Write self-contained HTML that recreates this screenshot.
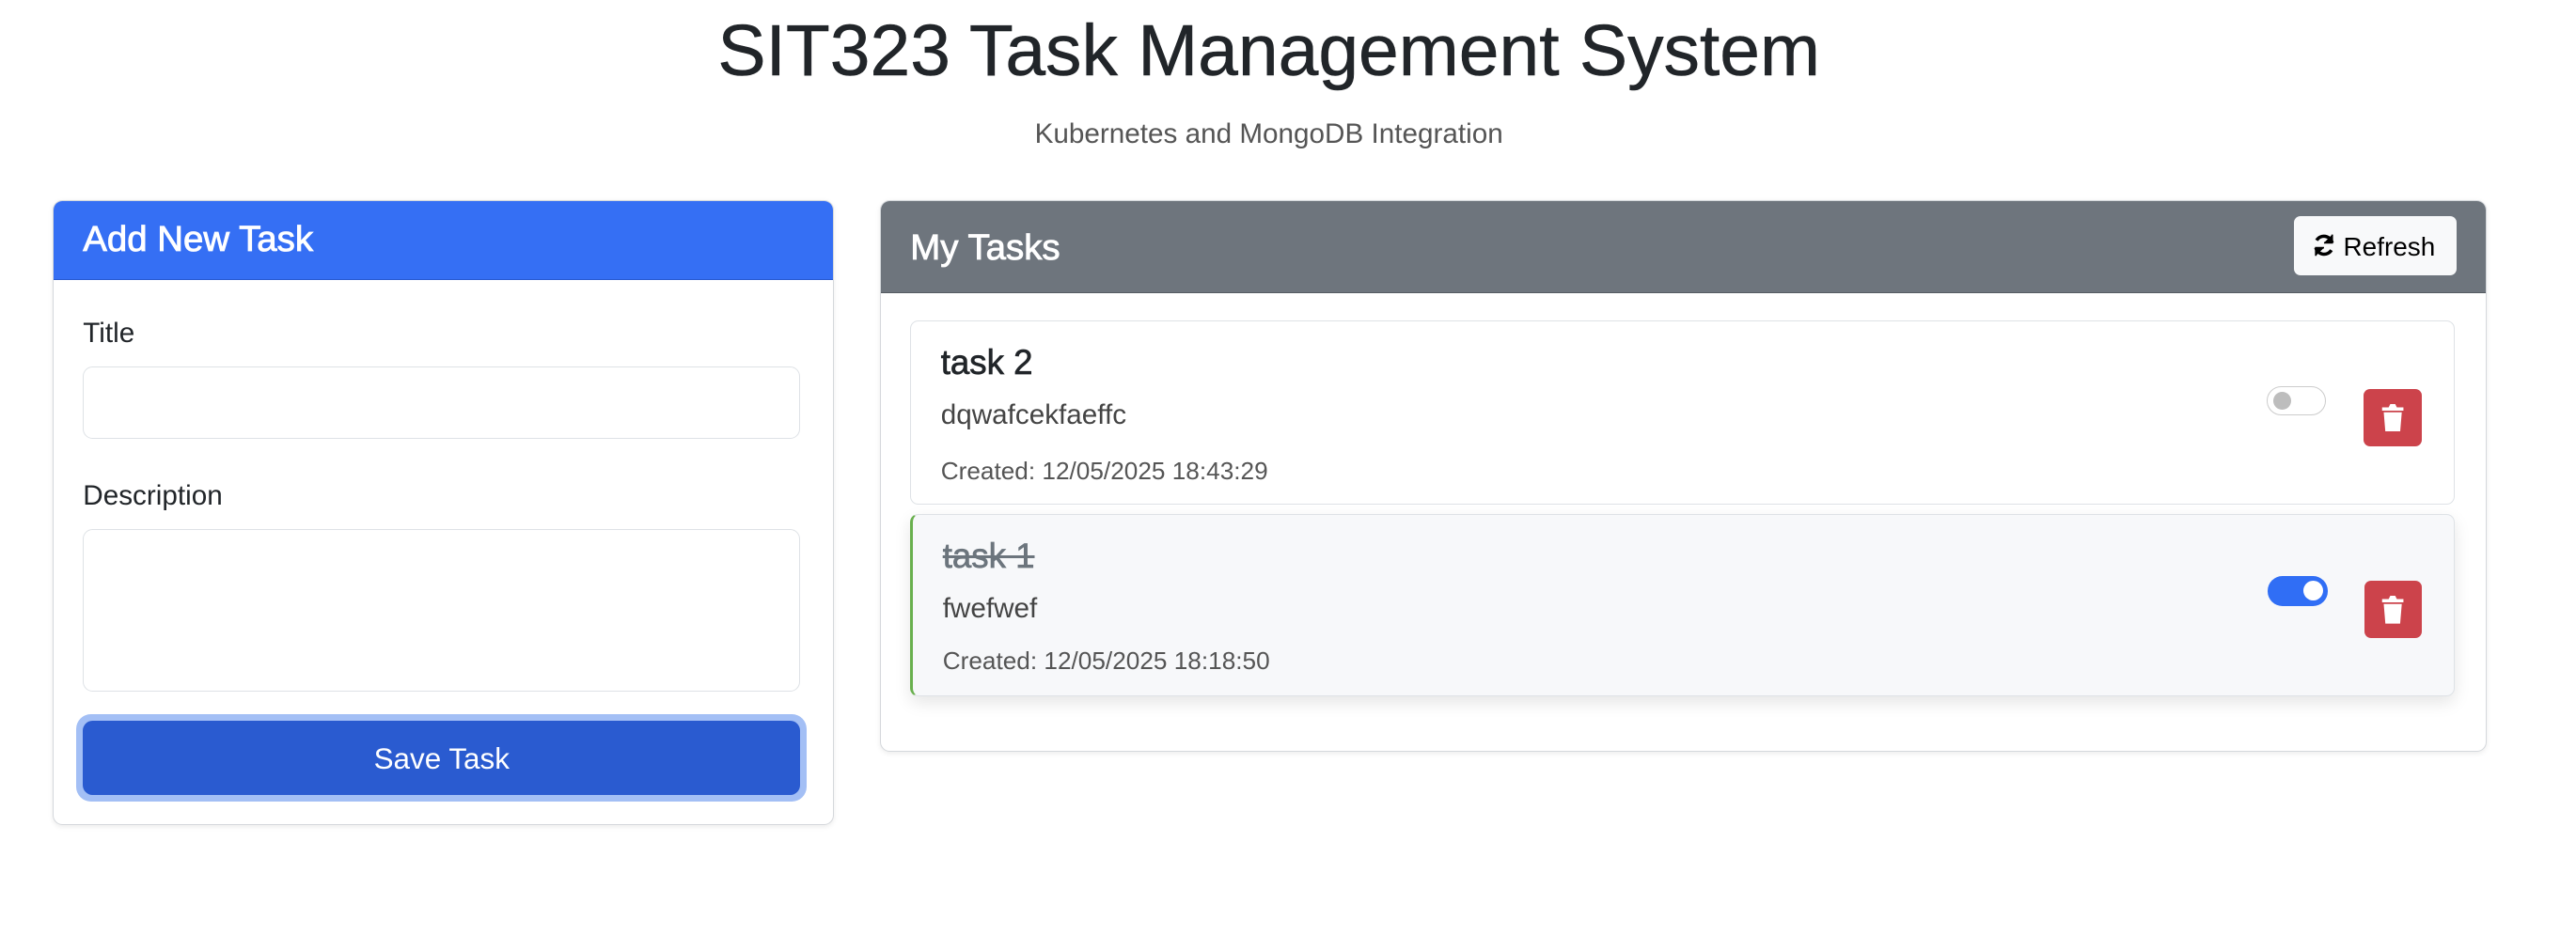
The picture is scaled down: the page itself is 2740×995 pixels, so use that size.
<!DOCTYPE html>
<html><head><meta charset="utf-8"><style>
html{zoom:1.746}
body{margin:0;width:1570px;height:570px;background:#fff;font-family:"Liberation Sans",sans-serif;color:#212529;position:relative;overflow:hidden}
.a{position:absolute;box-sizing:border-box}
h1{position:absolute;left:0;width:1546px;top:6px;margin:0;text-align:center;font-size:44px;font-weight:500;-webkit-text-stroke:0.3px #212529}
.sub{position:absolute;left:0;width:1546px;top:72px;text-align:center;font-size:17px;color:#555}
.card{border:1px solid #d5d8dc;border-radius:6px;overflow:hidden;background:#fff;box-shadow:0 1px 3px rgba(0,0,0,.08)}
.hd{position:absolute;left:0;right:0;top:0;color:#fff;font-size:22px;font-weight:500;-webkit-text-stroke:0.5px #fff}
label{position:absolute;font-size:17px}
.inp{border:1px solid #dee2e6;border-radius:6px;background:#fff}
.item{border:1px solid #dee2e6;border-radius:5px}
.tt{position:absolute;left:18px;font-size:21px;font-weight:500;-webkit-text-stroke:0.4px currentColor}
.ds{position:absolute;left:18px;font-size:17px;color:#444}
.cr{position:absolute;left:18px;font-size:15px;color:#555}
.del{background:#cc434b;border-radius:4px}
</style></head><body>
<h1>SIT323 Task Management System</h1>
<div class="sub">Kubernetes and MongoDB Integration</div>

<div class="a card" style="left:32px;top:122px;width:476px;height:381px">
 <div class="hd" style="height:48px;background:#356ff4;border-bottom:1px solid #2a5bd0;padding:11px 0 0 18px;box-sizing:border-box">Add New Task</div>
 <label style="left:18px;top:71px">Title</label>
 <div class="a inp" style="left:18px;top:101px;width:437px;height:44px"></div>
 <label style="left:18px;top:170px">Description</label>
 <div class="a inp" style="left:18px;top:200px;width:437px;height:99px"></div>
 <div class="a" style="left:14px;top:313px;width:445px;height:53px;background:#a3bff5;border-radius:9px"></div>
 <div class="a" style="left:18px;top:317px;width:437px;height:45px;background:#2a5bd0;border-radius:6px;color:#fff;text-align:center;font-size:18px;line-height:47px">Save Task</div>
</div>

<div class="a card" style="left:536px;top:122px;width:979px;height:336px">
 <div class="hd" style="height:56px;background:#6e757d;border-bottom:1px solid #555b62;padding:16px 0 0 18px;box-sizing:border-box">My Tasks</div>
 <div class="a" style="left:861px;top:9px;width:99px;height:36px;background:#f8f9fa;border-radius:4px;font-size:16px;line-height:38px;padding-left:30px;color:#000">Refresh
  <svg class="a" style="left:10px;top:10px" width="16" height="16" viewBox="0 0 16 16" fill="none" stroke="#000" stroke-width="2"><path d="M13 6.5A5.2 5.2 0 0 0 3.5 5"/><path d="M3 9.5A5.2 5.2 0 0 0 12.5 11"/><path d="M13 1.5v5h-5" fill="#000" stroke-width="1"/><path d="M3 14.5v-5h5" fill="#000" stroke-width="1"/></svg></div>

 <div class="a item" style="left:18px;top:73px;width:941px;height:112px;background:#fff">
  <div class="tt" style="top:13px">task 2</div>
  <div class="ds" style="top:47px">dqwafcekfaeffc</div>
  <div class="cr" style="top:82px">Created: 12/05/2025 18:43:29</div>
  <div class="a" style="left:826px;top:39px;width:36px;height:18px;border:1px solid #ccc;border-radius:9px;background:#fff"><div class="a" style="left:3px;top:3px;width:11px;height:11px;border-radius:50%;background:#bdbdbd"></div></div>
  <div class="a del" style="left:885px;top:41px;width:35px;height:35px"><svg class="a" style="left:10px;top:9px" width="15" height="17" viewBox="0 0 15 17"><path d="M1 2h4l1-2h3l1 2h4v2H1z M2 5h11l-1 12H3z" fill="#fff"/></svg></div>
 </div>

 <div class="a item" style="left:18px;top:191px;width:941px;height:111px;background:#f7f8fa;border-left:2px solid #69b04e;box-shadow:0 4px 10px rgba(0,0,0,.1)">
  <div class="tt" style="top:13px;color:#6c757d;text-decoration:line-through">task 1</div>
  <div class="ds" style="top:47px">fwefwef</div>
  <div class="cr" style="top:80px">Created: 12/05/2025 18:18:50</div>
  <div class="a" style="left:825px;top:37px;width:37px;height:18px;border-radius:9px;background:#306ef5"><div class="a" style="left:22px;top:3px;width:12px;height:12px;border-radius:50%;background:#fff"></div></div>
  <div class="a del" style="left:884px;top:40px;width:35px;height:35px"><svg class="a" style="left:10px;top:9px" width="15" height="17" viewBox="0 0 15 17"><path d="M1 2h4l1-2h3l1 2h4v2H1z M2 5h11l-1 12H3z" fill="#fff"/></svg></div>
 </div>
</div>
</body></html>
